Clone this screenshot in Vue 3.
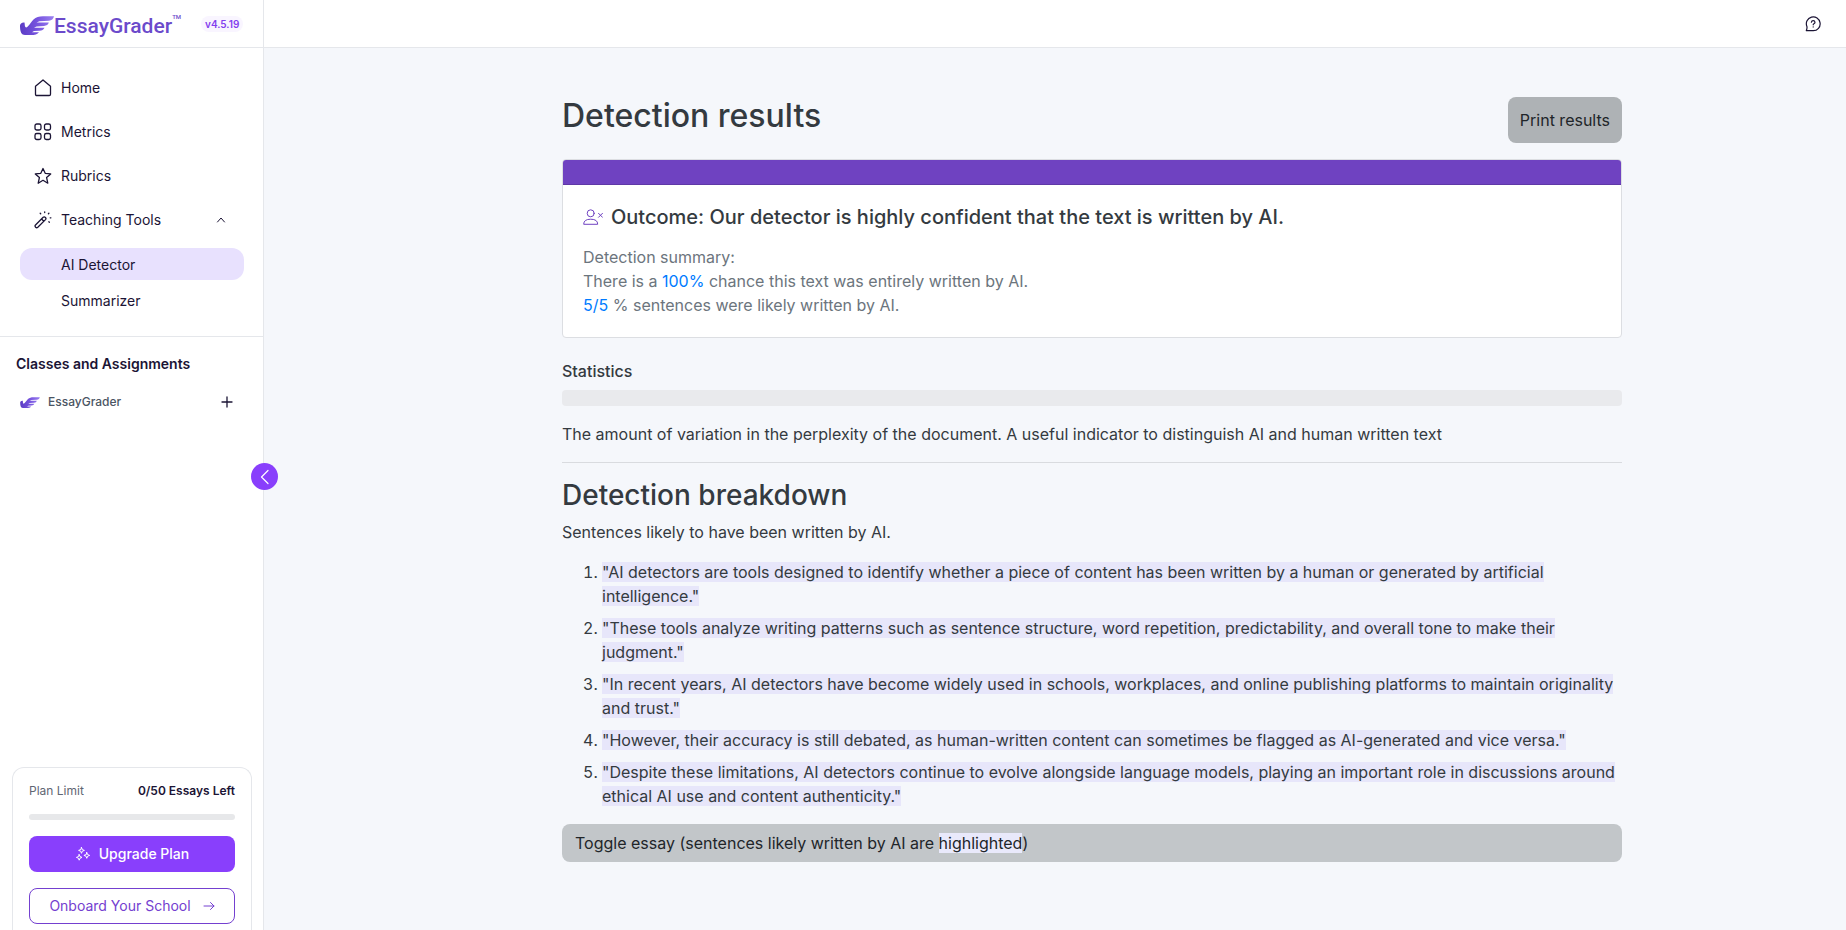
<script setup>
import { ref } from 'vue';

const toolsOpen = ref(true);
const showEssay = ref(false);
const activeTool = ref("AI Detector");
const tools = ["AI Detector", "Summarizer"];

const sentences = [
  "AI detectors are tools designed to identify whether a piece of content has been written by a human or generated by artificial intelligence.",
  "These tools analyze writing patterns such as sentence structure, word repetition, predictability, and overall tone to make their judgment.",
  "In recent years, AI detectors have become widely used in schools, workplaces, and online publishing platforms to maintain originality and trust.",
  "However, their accuracy is still debated, as human-written content can sometimes be flagged as AI-generated and vice versa.",
  "Despite these limitations, AI detectors continue to evolve alongside language models, playing an important role in discussions around ethical AI use and content authenticity."
];

function printResults(){
  window.print();
}
</script>

<template>
  <div class="app">
    <svg width="0" height="0" class="defs" aria-hidden="true">
      <defs>
        <linearGradient id="wing-fill" x1="0" y1="0" x2="1" y2="0">
          <stop offset="0" stop-color="#5b3cc4" />
          <stop offset="0.5" stop-color="#7653de" />
          <stop offset="1" stop-color="#9a7ff0" />
        </linearGradient>
        <symbol id="wing" viewBox="0 0 34 19">
          <path fill="url(#wing-fill)" d="M0 9.5C0 8 2 6 4.500 6.500C5 9 4.500 11 6 11.500C8.500 11 10.500 6.500 13.500 3.500C16 1 19 0.300 23 0.300H34C33.500 3 31.500 4.500 29 4.800L19.500 5.200L16.500 6.600H28.800C28.200 8.800 26.500 9.800 24 10L16.500 10.400L14 11.800H24.500C23.600 13.900 22 14.600 19.500 14.700L14 15L12 16.200H19C17.500 18.200 15 19 10.500 19H5C1.500 19 0 16 0 9.500Z" />
        </symbol>
      </defs>
    </svg>

    <aside class="sidebar">
      <div class="brand">
        <a href="#" class="logo">
          <svg class="logo-wing"><use href="#wing" /></svg>
          <span class="logo-text">EssayGrader</span>
          <span class="logo-tm">TM</span>
        </a>
        <span class="version">v4.5.19</span>
      </div>

      <nav class="nav">
        <a href="#" class="nav-item">
          <svg class="icon" viewBox="0 0 18 18"><path d="M1.500 7.200L9 1L16.500 7.200V15.200Q16.500 16.500 15.200 16.500H2.800Q1.500 16.500 1.500 15.200Z" /></svg>
          Home
        </a>
        <a href="#" class="nav-item">
          <svg class="icon" viewBox="0 0 18 18">
            <rect x="1" y="1" width="6" height="6" rx="1.800" /><rect x="10.500" y="1" width="6" height="6" rx="1.800" />
            <rect x="1" y="10.500" width="6" height="6" rx="1.800" /><rect x="10.500" y="10.500" width="6" height="6" rx="1.800" />
          </svg>
          Metrics
        </a>
        <a href="#" class="nav-item">
          <svg class="icon" viewBox="0 0 18 18"><path d="M9 1.500L11.200 6.300L16.700 6.900L12.600 10.600L13.800 16.200L9 13.300L4.200 16.200L5.400 10.600L1.300 6.900L6.800 6.300Z" /></svg>
          Rubrics
        </a>
        <button class="nav-item" :aria-expanded="toolsOpen" @click="toolsOpen = !toolsOpen">
          <svg class="icon" viewBox="0 0 18 18">
            <path d="M1.500 14L9.200 6.300Q10.300 5.400 11.400 6.400T11.500 8.600L3.800 16.300Q2.700 17.200 1.600 16.200T1.500 14ZM7.600 8L9.800 10.200" />
            <path d="M6.200 2.300L6.700 2.800M10.700 0.800V1.500M14.900 2.300L14.400 2.800M16.200 6.800H16.900M14.900 10.800L15.300 11.200" />
          </svg>
          Teaching Tools
          <svg class="chevron" :class="{ closed: !toolsOpen }" viewBox="0 0 10 10"><path d="M1.500 7L5 3L8.500 7" /></svg>
        </button>
        <div v-if="toolsOpen" class="sub-nav">
          <a v-for="tool in tools" :key="tool" href="#" class="sub-item" :class="{ active: tool === activeTool }" @click.prevent="activeTool = tool">{{ tool }}</a>
        </div>
      </nav>

      <section class="classes">
        <h2 class="classes-title">Classes and Assignments</h2>
        <div class="class-row">
          <svg class="class-wing"><use href="#wing" /></svg>
          <span class="class-name">EssayGrader</span>
          <button class="add-btn" aria-label="Add class">
            <svg viewBox="0 0 12 12"><path d="M6 1V11M1 6H11" /></svg>
          </button>
        </div>
      </section>

      <section class="plan">
        <div class="plan-row">
          <span class="plan-label">Plan Limit</span>
          <span class="plan-count">0/50 Essays Left</span>
        </div>
        <div class="plan-bar"></div>
        <button class="plan-btn upgrade">
          <svg class="sparkles" viewBox="0 0 16 16">
            <path d="M6.500 1.500L7.300 3.600L9.400 4.400L7.300 5.200L6.500 7.300L5.700 5.200L3.600 4.400L5.700 3.600ZM4.200 8.600L5 10.600L7 11.400L5 12.200L4.200 14.200L3.400 12.200L1.400 11.400L3.400 10.600ZM11.800 6.500L12.600 8.600L14.700 9.400L12.600 10.200L11.800 12.300L11 10.200L8.900 9.400L11 8.600Z" />
          </svg>
          Upgrade Plan
        </button>
        <button class="plan-btn onboard">
          Onboard Your School
          <svg class="arrow" viewBox="0 0 12 10"><path d="M1 5H11M7.500 1.500L11 5L7.500 8.500" /></svg>
        </button>
      </section>

      <button class="collapse" aria-label="Collapse sidebar">
        <svg viewBox="0 0 10 16"><path d="M8 1.500L1.500 8L8 14.500" /></svg>
      </button>
    </aside>

    <div class="page">
      <header class="topbar">
        <button class="help" aria-label="Help">
          <svg viewBox="0 0 16 16">
            <path d="M1.300 14.700H8.300A6.900 6.900 0 1 0 1.900 10.500Q2.300 12 1.300 14.700Z" />
            <path d="M6.400 6.200Q6.600 4.600 8.200 4.600T10 6.200Q10 7.200 8.900 7.700Q8.200 8.100 8.200 8.800M8.200 10.800V11" />
          </svg>
        </button>
      </header>

      <main class="content">
        <div class="results-head">
          <h1>Detection results</h1>
          <button class="print-btn" @click="printResults">Print results</button>
        </div>

        <section class="card">
          <div class="card-top"></div>
          <div class="card-body">
            <h5 class="outcome">
              <svg class="person" viewBox="0 0 20 16">
                <circle cx="7.700" cy="4.300" r="3.500" />
                <path d="M0.700 14.900Q0.700 10.200 7.700 10.200T14.700 14.900Z" />
                <path d="M15.500 4.300L19.500 8.300M19.500 4.300L15.500 8.300" />
              </svg>
              Outcome: Our detector is highly confident that the text is written by AI.
            </h5>
            <p class="summary">
              Detection summary:<br>
              There is a <span class="figure">100%</span> chance this text was entirely written by AI.<br>
              <span class="figure">5/5</span> % sentences were likely written by AI.
            </p>
          </div>
        </section>

        <section class="stats">
          <h6>Statistics</h6>
          <div class="progress"></div>
          <p>The amount of variation in the perplexity of the document. A useful indicator to distinguish AI and human written text</p>
        </section>

        <section class="breakdown">
          <h2>Detection breakdown</h2>
          <p>Sentences likely to have been written by AI.</p>
          <ol>
            <li v-for="sentence in sentences" :key="sentence"><mark>"{{ sentence }}"</mark></li>
          </ol>
          <button class="toggle-essay" @click="showEssay = !showEssay">Toggle essay (sentences likely written by AI are <mark>highlighted</mark>)</button>
          <p v-if="showEssay" class="essay"><mark>{{ sentences.join(" ") }}</mark></p>
        </section>
      </main>
    </div>
  </div>
</template>

<style>
body{
  background-color: #f5f7fb;
}
</style>

<style scoped>
*{
  box-sizing: border-box;
}

.app{
  display: flex;
  min-height: 100vh;
  font-family: Inter, "Liberation Sans", sans-serif;
  font-size: 16px;
  line-height: 24px;
  color: #343a40;
}

.defs{
  position: absolute;
}

button{
  font: inherit;
  color: inherit;
  border: none;
  background: none;
  padding: 0;
  cursor: pointer;
}

a{
  color: inherit;
  text-decoration: none;
}

h1, h2, h5, h6, p{
  margin: 0;
  font-weight: 500;
}

p{
  font-weight: 400;
}

svg{
  display: block;
  flex: none;
  fill: none;
  stroke: currentColor;
  stroke-linecap: round;
  stroke-linejoin: round;
}

/* sidebar */
.sidebar{
  position: sticky;
  top: 0;
  flex: none;
  display: flex;
  flex-direction: column;
  width: 264px;
  height: 100vh;
  background-color: #fff;
  border-right: 1px solid #e5e7eb;
  color: #1b1435;
}

.brand{
  flex: none;
  display: flex;
  align-items: center;
  height: 48px;
  padding-left: 20px;
  border-bottom: 1px solid #e5e7eb;
}

.logo{
  display: flex;
  align-items: center;
  color: #6b4acb;
}

.logo-wing{
  width: 34px;
  height: 19px;
  margin-top: 4px;
  stroke: none;
}

.logo-text{
  font-family: Roboto, sans-serif;
  font-size: 21px;
  font-weight: 500;
  margin-top: 4px;
}

.logo-tm{
  font-family: Roboto, sans-serif;
  font-size: 6px;
  font-weight: 500;
  line-height: 8px;
  align-self: flex-start;
  margin-top: 3px;
}

.version{
  margin-left: 20px;
  padding: 0 4px;
  border-radius: 8px;
  background-color: #f9f5ff;
  color: #8340ee;
  font-size: 10px;
  font-weight: 600;
  line-height: 16px;
}

.nav{
  flex: none;
  padding: 18px 19px 20px 20px;
  border-bottom: 1px solid #e5e7eb;
}

.nav-item{
  display: flex;
  align-items: center;
  gap: 9px;
  width: 100%;
  height: 44px;
  padding: 0 18px 0 14px;
  font-size: 14px;
}

.icon{
  width: 18px;
  height: 18px;
  stroke-width: 1.3;
}

.chevron{
  width: 10px;
  height: 10px;
  margin-left: auto;
}

.chevron.closed{
  transform: rotate(180deg);
}

.sub-nav{
  display: flex;
  flex-direction: column;
  gap: 4px;
  padding-top: 6px;
}

.sub-item{
  padding: 1px 41px 0;
  border-radius: 12px;
  font-size: 14px;
  line-height: 31px;
}

.sub-item.active{
  background-color: #e8e1fe;
}

.classes{
  flex: 1;
  padding: 15px 16px;
}

.classes-title{
  font-size: 14px;
  font-weight: 600;
  line-height: 24px;
}

.class-row{
  display: flex;
  align-items: center;
  gap: 8px;
  padding: 14px 14px 0 4px;
}

.class-wing{
  width: 20px;
  height: 11px;
  stroke: none;
}

.class-name{
  flex: 1;
  color: #4b5563;
  font-size: 12px;
  font-weight: 500;
}

.add-btn svg{
  width: 12px;
  height: 12px;
  stroke-width: 1.3;
}

.plan{
  flex: none;
  margin: 0 11px 0 12px;
  padding: 11px 16px 6px;
  border: 1px solid #e5e7eb;
  border-bottom: none;
  border-radius: 12px 12px 0 0;
}

.plan-row{
  display: flex;
  justify-content: space-between;
  font-size: 12px;
}

.plan-label{
  color: #5f6673;
}

.plan-count{
  font-weight: 600;
}

.plan-bar{
  height: 6px;
  margin: 11px 0 16px;
  border-radius: 3px;
  background-color: #e7e8ea;
}

.plan-btn{
  display: flex;
  align-items: center;
  justify-content: center;
  gap: 8px;
  width: 100%;
  height: 36px;
  border-radius: 8px;
  font-size: 14px;
}

.upgrade{
  margin-bottom: 16px;
  background-color: #893ffc;
  color: #fff;
  font-weight: 500;
}

.onboard{
  gap: 12px;
  border: 1px solid #7440d0;
  color: #7440d0;
}

.sparkles{
  width: 16px;
  height: 16px;
}

.arrow{
  width: 12px;
  height: 10px;
}

/* sits over the sidebar's right edge */
.collapse{
  position: absolute;
  top: calc(50% + 12px);
  right: -15px;
  display: flex;
  align-items: center;
  justify-content: center;
  width: 27px;
  height: 27px;
  margin-top: -14px;
  border-radius: 50%;
  background-color: #893ffc;
  color: #fff;
}

.collapse svg{
  width: 10px;
  height: 16px;
  stroke-width: 1.2;
}

/* page */
.page{
  flex: 1;
  min-width: 0;
}

.topbar{
  display: flex;
  align-items: center;
  justify-content: flex-end;
  height: 48px;
  padding-right: 25px;
  border-bottom: 1px solid #e5e7eb;
  background-color: #fff;
}

.help{
  color: #1b1435;
}

.help svg{
  width: 16px;
  height: 16px;
  stroke-width: 1.2;
}

.content{
  max-width: 1208px;
  margin: 0 auto;
  padding: 49px 37px 48px 111px;
}

.results-head{
  display: flex;
  justify-content: space-between;
  align-items: flex-start;
  margin-bottom: 16px;
}

h1{
  font-size: 32px;
  line-height: 38px;
}

.print-btn{
  padding: 11px 12px;
  border-radius: 8px;
  background-color: #aeb2b5;
  color: #212529;
}

.card{
  border: 1px solid #dcdee2;
  border-radius: 4px;
  background-color: #fff;
  overflow: hidden;
}

.card-top{
  height: 25px;
  background-color: #6f42c1;
  border-bottom: 1px solid #5f38a6;
}

.card-body{
  padding: 20px;
}

.outcome{
  display: flex;
  align-items: center;
  gap: 8px;
  margin-bottom: 16px;
  font-size: 20px;
  line-height: 24px;
}

.person{
  width: 20px;
  height: 16px;
  color: #6f42c1;
}

.summary{
  color: #6c757d;
}

.figure{
  color: #007bff;
}

.stats{
  padding: 21px 0 16px;
  border-bottom: 1px solid #d9dbdf;
}

h6{
  font-size: 16px;
}

.progress{
  height: 16px;
  margin: 7px 0 16px;
  border-radius: 4px;
  background-color: #e9eaed;
}

.breakdown{
  padding-top: 15px;
}

.breakdown h2{
  margin-bottom: 8px;
  font-size: 28px;
  line-height: 34px;
}

ol{
  margin: 16px 0;
  padding-left: 40px;
}

li + li{
  margin-top: 8px;
}

mark{
  background-color: #e7e6fa;
  color: inherit;
}

.toggle-essay{
  width: 100%;
  padding: 7px 13px;
  border-radius: 8px;
  background-color: #c2c6c9;
  color: #212529;
  text-align: left;
}

.toggle-essay mark{
  background-color: #e9e9fb;
}

.essay{
  margin-top: 16px;
}
</style>
